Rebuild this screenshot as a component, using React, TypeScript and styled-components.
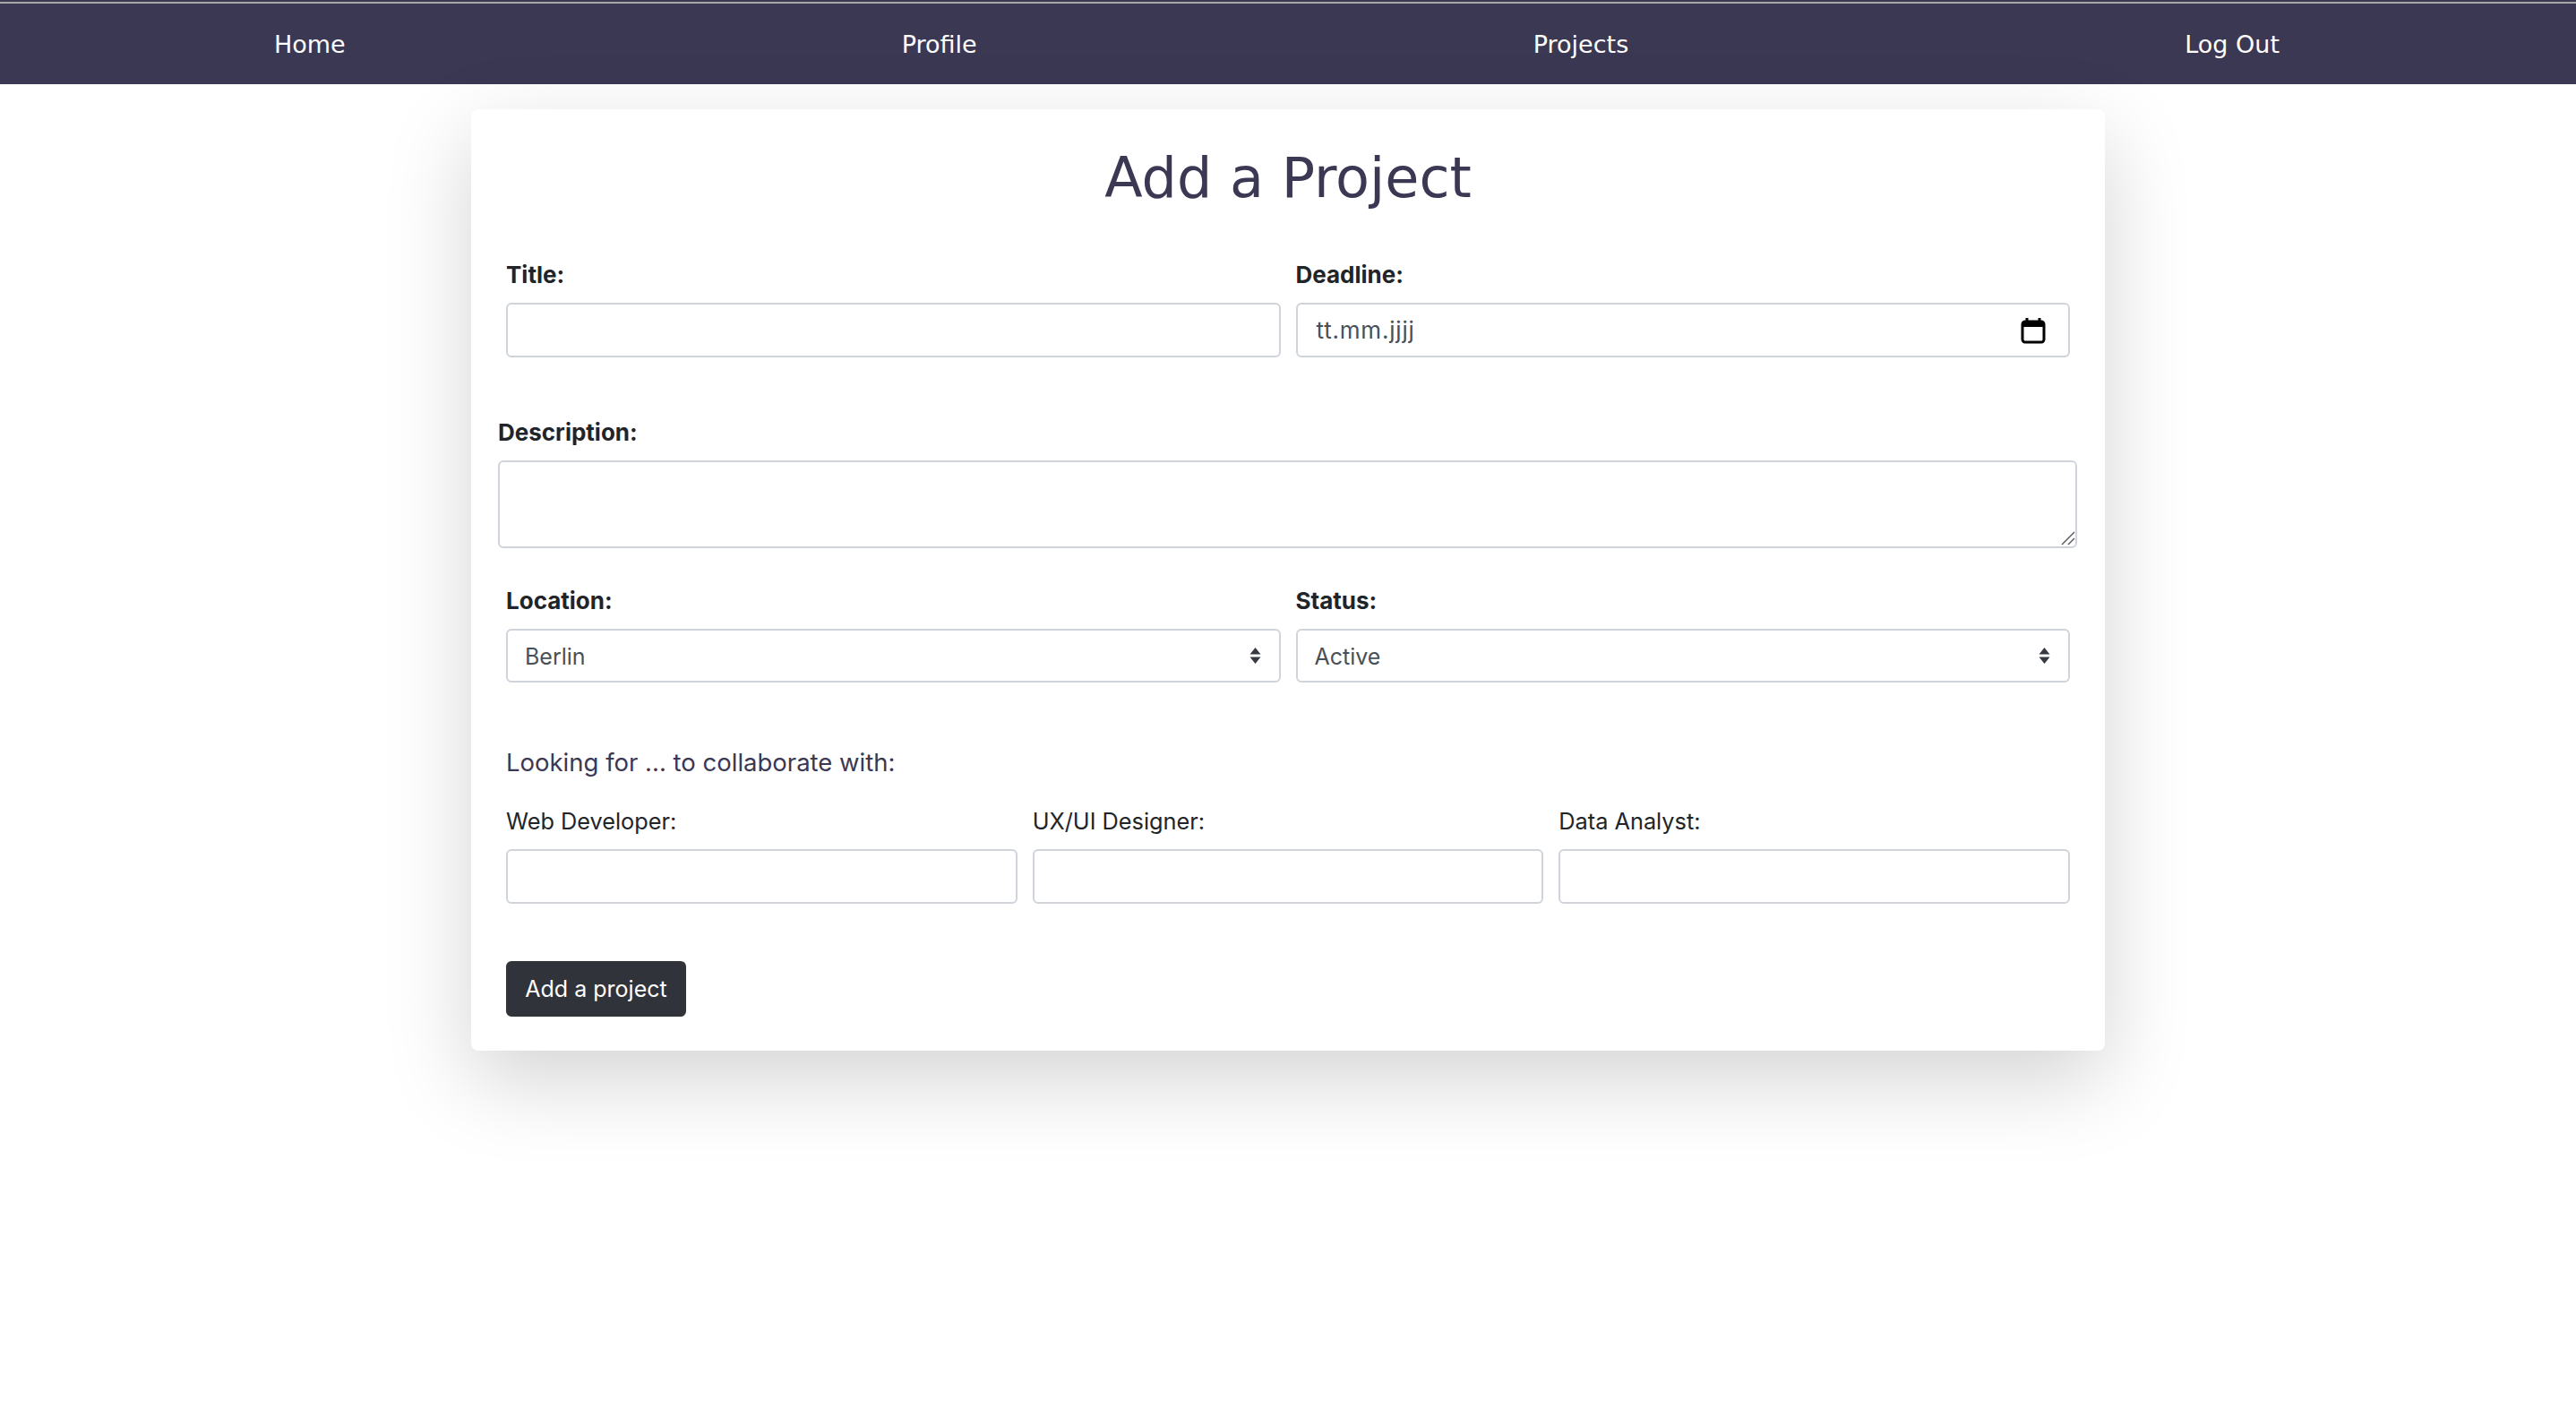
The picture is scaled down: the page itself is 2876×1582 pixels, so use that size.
import React from "react";
import styled, { createGlobalStyle } from "styled-components";

const GlobalStyle = createGlobalStyle`
  html, body {
    margin: 0;
    padding: 0;
    background: #fff;
    font-family: Inter, "Liberation Sans", sans-serif;
    color: #212529;
  }
`;

const Page = styled.div`
  min-height: 1582px;
  display: flex;
  flex-direction: column;
  align-items: center;
  background: #fff;
`;

const Navbar = styled.nav`
  box-sizing: border-box;
  width: 100%;
  height: 94px;
  background: #3b3854;
  box-shadow: inset 0 2px #3b3854, inset 0 4px #a7a7a7;
  padding: 5px 331px 0 306px;
  display: flex;
  align-items: center;
  justify-content: space-between;
`;

const NavLink = styled.a`
  color: #fff;
  font-family: "DejaVu Sans", sans-serif;
  font-size: 27px;
  text-decoration: none;
`;

const Card = styled.main`
  box-sizing: border-box;
  width: 1824px;
  height: 1051px;
  margin-top: 28px;
  background: #fff;
  border-radius: 8px;
  box-shadow: 0 32px 96px rgba(0, 0, 0, 0.175);
  display: flex;
  flex-direction: column;
`;

const Heading = styled.h1`
  margin: 40px 0 0;
  height: 74px;
  line-height: 74px;
  text-align: center;
  font-family: "DejaVu Sans", sans-serif;
  font-weight: 400;
  font-size: 62px;
  color: #3b3854;
`;

const Row = styled.div<{ $columns: number; $top: number }>`
  display: grid;
  grid-template-columns: repeat(${(p) => p.$columns}, 1fr);
  column-gap: 17px;
  padding: 0 39px;
  margin-top: ${(p) => p.$top}px;
`;

const WideGroup = styled.div`
  margin-top: 67px;
  padding: 0 31px 0 30px;
`;

const Field = styled.div`
  display: flex;
  flex-direction: column;
`;

const Label = styled.label<{ $plain?: boolean }>`
  font-size: ${(p) => (p.$plain ? 25.3 : 26)}px;
  line-height: 32px;
  padding-top: 1px;
  margin-bottom: 15px;
  font-weight: ${(p) => (p.$plain ? 400 : 700)};
`;

const TextInput = styled.input`
  box-sizing: border-box;
  width: 100%;
  height: 61px;
  border: 2px solid #ced4da;
  border-radius: 6px;
  background: #fff;
  outline: none;
`;

const DateField = styled.div`
  box-sizing: border-box;
  height: 61px;
  border: 2px solid #ced4da;
  border-radius: 6px;
  padding: 0 25px 0 21px;
  display: flex;
  align-items: center;
  justify-content: space-between;
  font-size: 26px;
  letter-spacing: 0.8px;
  color: #495057;
`;

const TextAreaWrap = styled.div`
  position: relative;
  height: 98px;
`;

const TextArea = styled.textarea`
  display: block;
  box-sizing: border-box;
  width: 100%;
  height: 100%;
  border: 2px solid #ced4da;
  border-radius: 6px;
  outline: none;
  resize: none;
`;

const ResizeGrip = styled.svg`
  position: absolute;
  right: 0;
  bottom: 0;
  width: 20px;
  height: 20px;
  pointer-events: none;
`;

const SelectWrap = styled.div`
  position: relative;
  height: 60px;
`;

const Select = styled.select`
  box-sizing: border-box;
  width: 100%;
  height: 100%;
  appearance: none;
  border: 2px solid #ced4da;
  border-radius: 6px;
  background: #fff;
  padding: 1px 19px 0;
  font-family: Inter, "Liberation Sans", sans-serif;
  font-size: 25px;
  color: #495057;
  outline: none;
`;

const SelectArrows = styled.svg`
  position: absolute;
  top: 21px;
  right: 22px;
  width: 13px;
  height: 18px;
`;

const CollabTitle = styled.p`
  margin: 72px 0 0;
  padding-left: 39px;
  font-size: 27.5px;
  line-height: 34px;
  color: #3b3854;
`;

const Submit = styled.button`
  align-self: flex-start;
  box-sizing: border-box;
  width: 201px;
  height: 62px;
  margin: 64px 0 0 39px;
  border: none;
  border-radius: 6px;
  background: #30333a;
  color: #fff;
  font-family: Inter, "Liberation Sans", sans-serif;
  font-size: 25px;
`;

const CalendarIcon = () => (
  <svg width="28" height="30" viewBox="0 0 28 30">
    <path d="M7 1v4M21 1v4" stroke="#000" strokeWidth="3" />
    <rect x="2" y="5" width="24" height="23" rx="3" fill="none" stroke="#000" strokeWidth="3" />
    <rect x="2" y="5" width="24" height="6" fill="#000" />
  </svg>
);

const Arrows = () => (
  <SelectArrows viewBox="0 0 13 18">
    <path d="M6.5 0 12.5 7.5H.5zM6.5 18 .5 10.5h12z" fill="#343a40" />
  </SelectArrows>
);

const navItems = ["Home", "Profile", "Projects", "Log Out"];
const roles = ["Web Developer:", "UX/UI Designer:", "Data Analyst:"];

export default function App() {
  return (
    <Page>
      <GlobalStyle />
      <Navbar>
        {navItems.map((item) => (
          <NavLink key={item} href="#">
            {item}
          </NavLink>
        ))}
      </Navbar>
      <Card>
        <Heading>Add a Project</Heading>
        <Row $columns={2} $top={54}>
          <Field>
            <Label>Title:</Label>
            <TextInput type="text" />
          </Field>
          <Field>
            <Label>Deadline:</Label>
            <DateField>
              <span>tt.mm.jjjj</span>
              <CalendarIcon />
            </DateField>
          </Field>
        </Row>
        <WideGroup>
          <Field>
            <Label>Description:</Label>
            <TextAreaWrap>
              <TextArea />
              <ResizeGrip viewBox="0 0 20 20">
                <path d="M3 16 17 2M10 16 17 9" stroke="#555" strokeWidth="1.4" fill="none" />
              </ResizeGrip>
            </TextAreaWrap>
          </Field>
        </WideGroup>
        <Row $columns={2} $top={42}>
          <Field>
            <Label>Location:</Label>
            <SelectWrap>
              <Select defaultValue="Berlin">
                <option>Berlin</option>
              </Select>
              <Arrows />
            </SelectWrap>
          </Field>
          <Field>
            <Label>Status:</Label>
            <SelectWrap>
              <Select defaultValue="Active">
                <option>Active</option>
              </Select>
              <Arrows />
            </SelectWrap>
          </Field>
        </Row>
        <CollabTitle>Looking for ... to collaborate with:</CollabTitle>
        <Row $columns={3} $top={32}>
          {roles.map((role) => (
            <Field key={role}>
              <Label $plain>{role}</Label>
              <TextInput type="text" />
            </Field>
          ))}
        </Row>
        <Submit>Add a project</Submit>
      </Card>
    </Page>
  );
}
